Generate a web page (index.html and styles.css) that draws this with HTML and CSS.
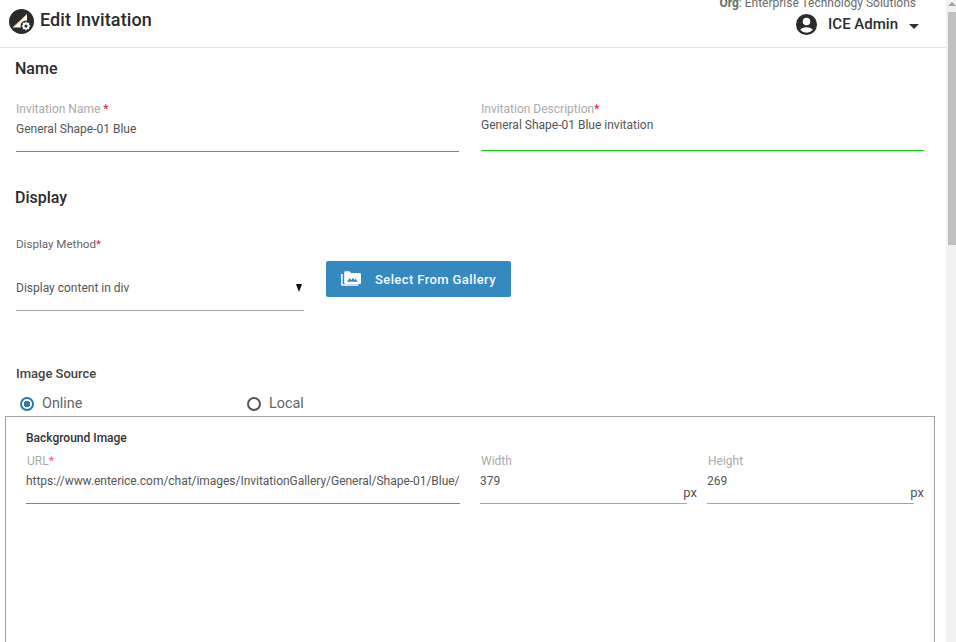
FILE: index.html
```html
<!DOCTYPE html>
<html lang="en">
<head>
<meta charset="utf-8">
<title>Edit Invitation</title>
<link rel="stylesheet" href="styles.css">
</head>
<body>
<div class="app">
  <div class="main">
    <header class="topbar">
      <div class="brand">
        <svg class="logo" viewBox="0 0 25 25" aria-hidden="true">
          <circle cx="12.5" cy="12.5" r="12.500" fill="#2b2b2b"/>
          <path d="M3.700 18.500 L18 5 L18 14 L13 18.500 Z" fill="#fff"/>
          <path d="M4 18.500 L17.500 6" stroke="#e9b44c" stroke-width="0.800" fill="none"/>
          <circle cx="17" cy="17" r="5.500" fill="#2b2b2b"/>
          <circle cx="17" cy="17" r="2.500" fill="none" stroke="#fff" stroke-width="1.800"/>
          <path d="M17 12.800v1.600M17 19.600v1.600M12.800 17h1.600M19.600 17h1.600M14 14l1.100 1.100M18.900 18.900l1.100 1.100M20 14l-1.100 1.100M15.100 18.900L14 20" stroke="#fff" stroke-width="1.300"/>
        </svg>
        <h1 class="title">Edit Invitation</h1>
      </div>
      <div class="account">
        <div class="org"><b>Org</b>: Enterprise Technology Solutions</div>
        <div class="user">
          <svg class="avatar" viewBox="0 0 24 24" aria-hidden="true">
            <path fill="#2b2b2b" d="M12 1a11 11 0 1 0 0 22 11 11 0 0 0 0-22zm0 4a3.900 3.900 0 1 1 0 7.800A3.900 3.900 0 0 1 12 5zm0 15.600a8.700 8.700 0 0 1-6.600-3.100c.9-1.700 3.900-2.700 6.600-2.700s5.700 1 6.600 2.700a8.700 8.700 0 0 1-6.600 3.100z"/>
          </svg>
          <span class="username">ICE Admin</span>
          <span class="caret"></span>
        </div>
      </div>
    </header>

    <section class="content">
      <h2 class="section-title">Name</h2>
      <div class="name-row">
        <div class="field">
          <label class="label">Invitation Name <span class="req">*</span></label>
          <div class="value line-green">General Shape-01 Blue</div>
        </div>
        <div class="field field-desc">
          <label class="label">Invitation Description<span class="req">*</span></label>
          <div class="value line-bright">General Shape-01 Blue invitation</div>
        </div>
      </div>

      <h2 class="section-title display-title">Display</h2>
      <div class="display-row">
        <div class="select-field">
          <label class="label label-dark">Display Method<span class="req">*</span></label>
          <div class="select">
            <span>Display content in div</span>
            <span class="select-arrow"></span>
          </div>
        </div>
        <button class="gallery-btn" type="button">
          <svg class="gallery-icon" viewBox="0 0 22 17" aria-hidden="true">
            <path fill="#fff" d="M0 3h1.800v11.200H19V16H1.500A1.500 1.500 0 0 1 0 14.500z"/>
            <path fill="#fff" d="M3.500 1.500A1.500 1.500 0 0 1 5 0h4l2 2h9.500A1.500 1.500 0 0 1 22 3.500v9a1.500 1.500 0 0 1-1.500 1.500H5a1.500 1.500 0 0 1-1.500-1.500z"/>
            <path fill="#348ac0" d="M6.500 11.500l3-4 1.800 2.300 1.700-2.800 1.800 2.600 1.200-1.600 2.500 3.500z"/>
          </svg>
          <span>Select From Gallery</span>
        </button>
      </div>

      <div class="source-title">Image Source</div>
      <div class="radios">
        <div class="radio-item radio-online">
          <span class="radio radio-on"></span>
          <span>Online</span>
        </div>
        <div class="radio-item">
          <span class="radio"></span>
          <span>Local</span>
        </div>
      </div>

      <div class="bg-box">
        <div class="bg-title">Background Image</div>
        <div class="bg-row">
          <div class="bg-field">
            <label class="label">URL<span class="req req-soft">*</span></label>
            <div class="value url-value line-green">https://www.enterice.com/chat/images/InvitationGallery/General/Shape-01/Blue/</div>
          </div>
          <div class="bg-field">
            <label class="label">Width</label>
            <div class="value size-value">379<span class="unit">px</span></div>
          </div>
          <div class="bg-field">
            <label class="label">Height</label>
            <div class="value size-value">269<span class="unit">px</span></div>
          </div>
        </div>
      </div>
    </section>
  </div>

  <div class="scrollbar">
    <span class="scroll-up"></span>
    <span class="scroll-thumb"></span>
  </div>
</div>
</body>
</html>
```
FILE: styles.css
```css
* { box-sizing: border-box; }
html, body { margin: 0; height: 100%; overflow: hidden; background: #fff; }
body { font-family: Roboto, "Liberation Sans", sans-serif; color: #555; }

.app { display: flex; width: 956px; height: 642px; overflow: hidden; }
.main { width: 946px; flex: none; }

.topbar {
  height: 48px;
  border-bottom: 1px solid #e4e4e4;
  display: flex;
  justify-content: space-between;
  padding: 0 27px 0 9px;
}
.brand { display: flex; align-items: center; gap: 6px; height: 40px; }
.logo { width: 25px; height: 25px; display: block; margin-top: 2px; }
.title { margin: 0; font-size: 18px; font-weight: 500; letter-spacing: 0.1px; color: #2b2b2b; line-height: 24px; }

.account { display: flex; flex-direction: column; align-items: flex-end; margin-top: -5px; }
.org { font-size: 12px; line-height: 16px; color: #6b6b6b; margin-right: 3px; }
.org b { font-weight: 700; }
.user { display: flex; align-items: center; height: 26px; }
.avatar { width: 23px; height: 23px; display: block; margin-right: 10px; }
.username { font-size: 15px; font-weight: 500; color: #2b2b2b; }
.caret {
  width: 0; height: 0; margin: 4px 0 0 11px;
  border-left: 5px solid transparent;
  border-right: 5px solid transparent;
  border-top: 5px solid #333;
}

.content { padding: 11px 11px 0 16px; }
.section-title { margin: 0 0 0 -1px; font-size: 16px; font-weight: 500; line-height: 19px; color: #2b2b2b; }

.name-row { display: grid; grid-template-columns: 443px 443px; column-gap: 22px; margin-top: 24px; }
.label { display: block; font-size: 12px; line-height: 14px; color: #aaa; }
.label-dark { color: #666; font-size: 11.600px; }
.req { color: #e0103c; }
.req-soft { color: #f0607c; }
.value { font-size: 12px; line-height: 14px; color: #555; }
.field > .value { height: 36px; padding-top: 6px; }
.field-desc > .value { height: 35px; padding-top: 2px; }
.line-green { border-bottom: 1px solid #2bc02b; }
.line-bright { border-bottom: 1px solid #00e000; }

.display-title { margin-top: 36px; }
.display-row { display: flex; align-items: flex-start; gap: 22px; margin-top: 30px; }
.select-field { width: 288px; flex: none; }
.select {
  margin-top: 16px;
  height: 44px;
  padding: 14px 2px 0 0;
  font-size: 12px;
  line-height: 14px;
  color: #555;
  border-bottom: 1px solid #a5a5a5;
  display: flex;
  justify-content: space-between;
}
.select-arrow {
  width: 0; height: 0; margin-top: 3px;
  border-left: 3.500px solid transparent;
  border-right: 3.500px solid transparent;
  border-top: 8px solid #111;
}
.gallery-btn {
  margin-top: 24px;
  width: 185px;
  height: 36px;
  border: 0;
  border-radius: 2px;
  background: #348ac0;
  color: #f4f8fb;
  font: 500 13px Roboto, sans-serif;
  letter-spacing: 0.4px;
  display: flex;
  align-items: center;
  padding: 0 0 0 15px;
  gap: 14px;
}
.gallery-icon { width: 20px; height: 16px; display: block; }

.source-title { margin-top: 56px; font-size: 13px; line-height: 14px; font-weight: 500; color: #444; }
.radios { display: flex; margin-top: 14px; font-size: 14.400px; line-height: 18px; color: #666; }
.radio-item { display: flex; align-items: center; gap: 8px; }
.radio-online { width: 231px; padding-left: 4px; }
.radio { width: 14px; height: 14px; border: 2px solid #555; border-radius: 50%; display: block; flex: none; }
.radio-on { border-color: #2a79a8; background: radial-gradient(circle, #2a79a8 0 3px, #fff 3.500px); }

.bg-box {
  margin: 3px 0 0 -11px;
  width: 930px;
  height: 300px;
  border: 1px solid #a5a5a5;
  border-bottom: 0;
  padding: 14px 10px 0 20px;
}
.bg-title { font-size: 12px; line-height: 14px; font-weight: 500; color: #333; }
.bg-row { display: grid; grid-template-columns: 434px 207px 207px; column-gap: 20px; margin-top: 9px; }
.bg-field .label { padding-left: 1px; }
.bg-field .value { height: 36px; padding-top: 6px; }
.url-value { white-space: nowrap; letter-spacing: -0.03px; }
.size-value { border-bottom: 1px solid #a5a5a5; position: relative; }
.unit { position: absolute; right: -10px; top: 18px; font-size: 13px; }

.scrollbar { width: 10px; flex: none; background: #f1f1f1; position: relative; }
.scroll-up {
  position: absolute; left: 2px; top: 2px;
  width: 0; height: 0;
  border-left: 4px solid transparent;
  border-right: 4px solid transparent;
  border-bottom: 4px solid #a3a3a3;
}
.scroll-thumb { position: absolute; left: 2px; right: 0; top: 12px; height: 233px; background: #c1c1c1; }
```
